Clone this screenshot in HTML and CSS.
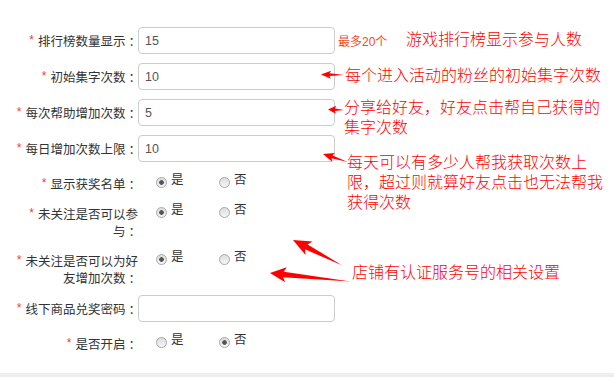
FILE: index.html
```html
<!DOCTYPE html>
<html lang="zh-CN">
<head>
  <meta charset="UTF-8">
  <title>集字活动设置</title>
  <link rel="stylesheet" href="styles.css">
</head>
<body>
  <div class="page">
    <form class="panel">
      <div class="row">
        <label class="lbl"><i class="req">*</i>排行榜数量显示<span class="colon">：</span></label>
        <div class="ctl"><input class="txt" type="text" value="15"><span class="tip">最多20个</span></div>
      </div>
      <div class="row">
        <label class="lbl"><i class="req">*</i>初始集字次数<span class="colon">：</span></label>
        <div class="ctl"><input class="txt" type="text" value="10"></div>
      </div>
      <div class="row">
        <label class="lbl"><i class="req">*</i>每次帮助增加次数<span class="colon">：</span></label>
        <div class="ctl"><input class="txt" type="text" value="5"></div>
      </div>
      <div class="row">
        <label class="lbl"><i class="req">*</i>每日增加次数上限<span class="colon">：</span></label>
        <div class="ctl"><input class="txt" type="text" value="10"></div>
      </div>
      <div class="row row-radio">
        <label class="lbl"><i class="req">*</i>显示获奖名单<span class="colon">：</span></label>
        <div class="radios">
          <label class="opt"><input type="radio" name="showWin" checked><span>是</span></label>
          <label class="opt"><input type="radio" name="showWin"><span>否</span></label>
        </div>
      </div>
      <div class="row row-radio">
        <label class="lbl"><i class="req">*</i>未关注是否可以参与<span class="colon">：</span></label>
        <div class="radios">
          <label class="opt"><input type="radio" name="joinFollow" checked><span>是</span></label>
          <label class="opt"><input type="radio" name="joinFollow"><span>否</span></label>
        </div>
      </div>
      <div class="row row-radio">
        <label class="lbl"><i class="req">*</i>未关注是否可以为好友增加次数<span class="colon">：</span></label>
        <div class="radios">
          <label class="opt"><input type="radio" name="helpFollow" checked><span>是</span></label>
          <label class="opt"><input type="radio" name="helpFollow"><span>否</span></label>
        </div>
      </div>
      <div class="row">
        <label class="lbl"><i class="req">*</i>线下商品兑奖密码<span class="colon">：</span></label>
        <div class="ctl"><input class="txt" type="text" value=""></div>
      </div>
      <div class="row row-radio">
        <label class="lbl"><i class="req">*</i>是否开启<span class="colon">：</span></label>
        <div class="radios">
          <label class="opt"><input type="radio" name="enabled"><span>是</span></label>
          <label class="opt"><input type="radio" name="enabled" checked><span>否</span></label>
        </div>
      </div>
    </form>

    <!-- annotations drawn over the form -->
    <svg class="arrows" width="614" height="377" viewBox="0 0 614 377">
      <g fill="#ff0000">
        <polygon transform="translate(321 74.5) rotate(1.5)" points="0,0 10,-4 8.5,-1.4 23,0 8.5,1.4 10,4"/>
        <polygon transform="translate(328 109.5) rotate(2)" points="0,0 8,-4 7,-1.3 16,0 7,1.3 8,4"/>
        <polygon transform="translate(323 154) rotate(17.7)" points="0,0 11,-4.5 9.5,-1.5 26,0 9.5,1.5 11,4.5"/>
        <polygon transform="translate(293 240) rotate(27.3)" points="0,0 18,-7.5 15,-2.8 55,0 15,2.8 18,7.5"/>
        <polygon transform="translate(270 273) rotate(6)" points="0,0 16,-7.5 13.5,-2.8 81,0 13.5,2.8 16,7.5"/>
      </g>
    </svg>
    <p class="note note-1">游戏排行榜显示参与人数</p>
    <p class="note note-2">每个进入活动的粉丝的初始集字次数</p>
    <p class="note note-3">分享给好友，好友点击帮自己获得的<br>集字次数</p>
    <p class="note note-4">每天可以有多少人帮我获取次数上<br>限，超过则就算好友点击也无法帮我<br>获得次数</p>
    <p class="note note-5">店铺有认证服务号的相关设置</p>
  </div>
</body>
</html>
```

FILE: styles.css
```css
html,
body {
  margin: 0;
  background: #eeeeee;
}

body {
  font-family: "Liberation Sans", "Noto Sans CJK SC", sans-serif;
  font-size: 12.5px;
  color: #333;
}

.page {
  position: relative;
  width: 614px;
  height: 377px;
  overflow: hidden;
}

.panel {
  display: flex;
  flex-direction: column;
  gap: 9px;
  margin: 0;
  padding: 27px 0 21px 13px;
  background: #fff;
}

.row {
  display: flex;
  align-items: flex-start;
}

.row-radio {
  padding-top: 4px;
}

.lbl {
  width: 125px;
  flex: none;
  text-align: right;
  font-family: "Noto Sans CJK SC", sans-serif;
  line-height: 17px;
  padding-top: 5px;
}

.row-radio .lbl {
  padding-top: 0;
}

/* the SC colon sits at the left of its box; nudge it to the middle */
.colon {
  position: relative;
  left: 3px;
}

.req {
  font-style: normal;
  font-family: "Liberation Sans", sans-serif;
  font-size: 12px;
  color: #f03c3c;
  margin-right: 4px;
  vertical-align: top;
}

.ctl {
  display: flex;
  align-items: center;
}

.txt {
  box-sizing: border-box;
  width: 197px;
  height: 27px;
  margin: 0;
  padding: 0 6px;
  border: 1px solid #cccccc;
  border-radius: 4px;
  font-family: "Liberation Sans", "Noto Sans CJK SC", sans-serif;
  font-size: 12.5px;
  color: #555;
  background: #fff;
  outline: none;
}

.tip {
  margin-left: 3px;
  font-size: 12px;
  color: #f24a1f;
}

.radios {
  display: flex;
  padding-left: 18px;
}

.opt {
  display: flex;
  align-items: flex-start;
  width: 63px;
  line-height: 17px;
}

.opt span {
  margin-top: -3px;
}

.opt input {
  appearance: none;
  -webkit-appearance: none;
  box-sizing: border-box;
  width: 11px;
  height: 11px;
  margin: 2px 4px 0 0;
  border: 1px solid #a8a8a8;
  border-radius: 50%;
  background: linear-gradient(#dcdcdc, #f6f6f6);
}

.opt input:checked {
  background:
    radial-gradient(circle, #555 0 2px, rgba(85, 85, 85, 0) 2.6px),
    linear-gradient(#dcdcdc, #f6f6f6);
}

.arrows {
  position: absolute;
  left: 0;
  top: 0;
}

.note {
  position: absolute;
  margin: 0;
  font-family: "Noto Sans CJK SC", sans-serif;
  font-weight: 300;
  font-size: 16px;
  line-height: 20px;
  color: #ff0000;
  white-space: nowrap;
}

.note-1 { left: 406px; top: 28px; }
.note-2 { left: 345px; top: 64px; }
.note-3 { left: 344px; top: 96px; }
.note-4 { left: 347px; top: 151px; }
.note-5 { left: 352px; top: 261px; }
```
